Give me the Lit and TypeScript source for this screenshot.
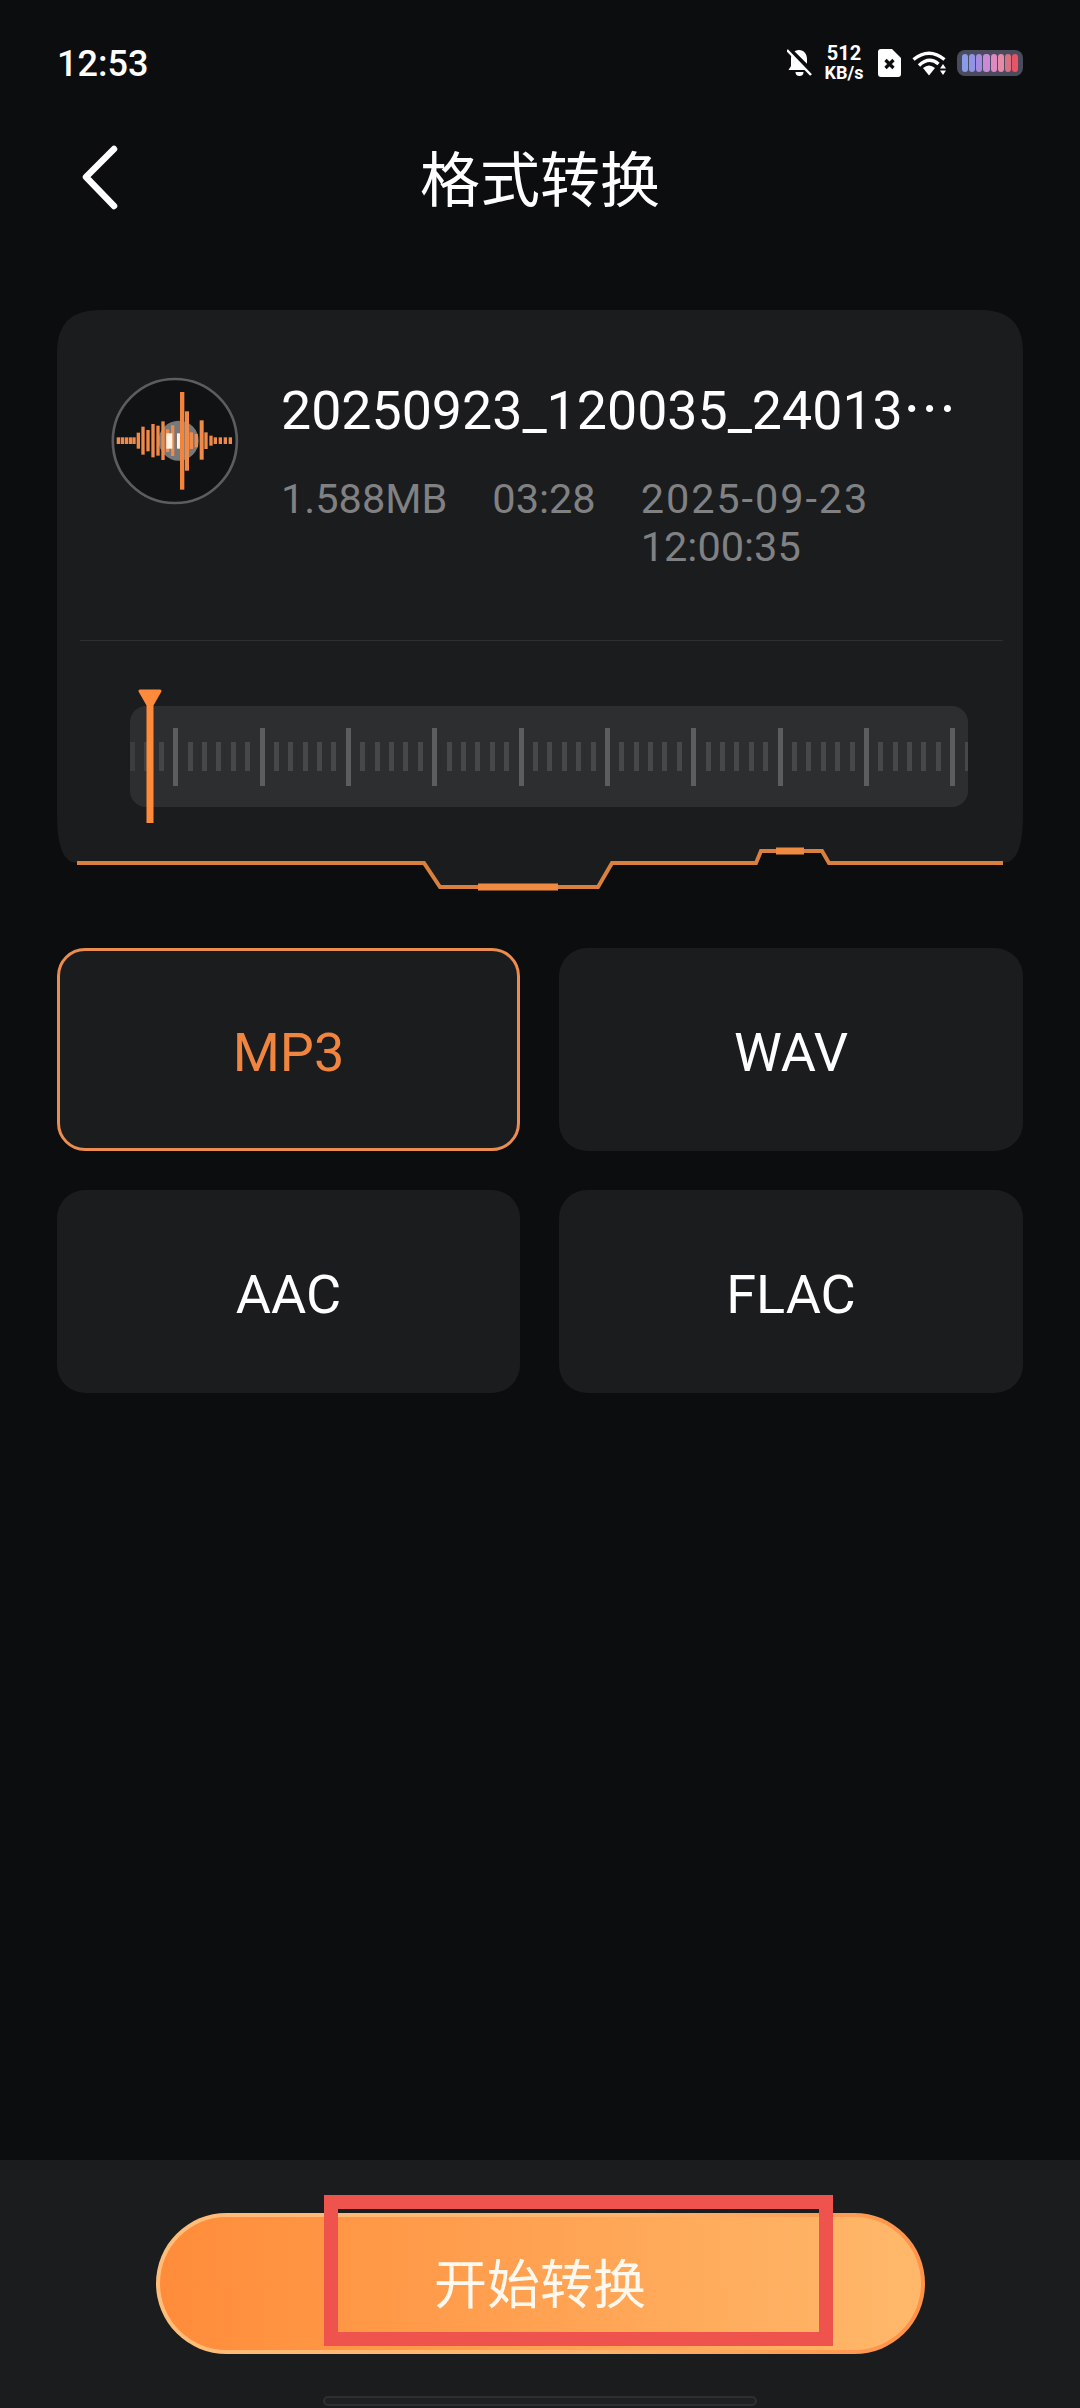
import { LitElement, html, svg, css } from 'lit';
import { customElement } from 'lit/decorators.js';

const BATTERY = ['#8a9be8', '#8f94e6', '#a48ae0', '#c98ad8', '#de8ac0', '#e58aa8', '#d9707f', '#e65468'];

// [x, half height] of each wave bar, in the avatar's viewBox
const WAVE = [
  [84, 10], [96, 10], [108, 10], [120, 10], [131, 10], [144, 24], [158, 42], [173, 32], [188, 50],
  [203, 45], [218, 58], [232, 34], [247, 46], [303, 25], [318, 20], [347, 25], [362, 15],
  [375, 10], [390, 10], [405, 10], [420, 10],
];

const FORMATS = ['MP3', 'WAV', 'AAC', 'FLAC'];

@customElement('app-root')
export class AppRoot extends LitElement {
  static styles = css`
    :host {
      display: block;
      width: 1080px;
      height: 2408px;
      background: #0c0d0f;
      color: #fff;
      font-family: Roboto, 'Noto Sans CJK SC', sans-serif;
      overflow: hidden;
    }

    .page {
      display: flex;
      flex-direction: column;
      height: 2408px;
    }

    .status {
      display: flex;
      align-items: center;
      justify-content: space-between;
      height: 126px;
      padding: 0 57px;
      box-sizing: border-box;
    }

    .time {
      padding-top: 2px;
      font-size: 36px;
      font-weight: 500;
    }

    .status-icons {
      display: flex;
      align-items: center;
    }

    .status-icons svg {
      display: block;
    }

    .speed {
      display: flex;
      flex-direction: column;
      align-items: center;
      width: 38px;
      margin: 0 15px 0 13px;
      font-size: 18px;
      font-weight: 700;
      line-height: 20px;
      white-space: nowrap;
    }

    .speed .rate {
      font-size: 20px;
    }

    .wifi {
      margin: 0 10px 0 11px;
    }

    .battery {
      display: flex;
      gap: 1px;
      width: 66px;
      height: 26px;
      padding: 4px 5px;
      box-sizing: border-box;
      border-radius: 8px;
      background: #4a4c5e;
    }

    .battery span {
      flex: 1;
      border-radius: 3px;
    }

    .header {
      display: flex;
      align-items: center;
      justify-content: center;
      position: relative;
      height: 104px;
    }

    .back {
      position: absolute;
      left: 78px;
      top: 18px;
    }

    .title {
      margin-top: -6px;
      font-size: 60px;
      font-weight: 400;
      font-family: 'Noto Sans CJK SC', sans-serif;
    }

    .card {
      position: relative;
      width: 966px;
      height: 585px;
      margin: 80px 0 53px 57px;
      padding-top: 67px;
      box-sizing: border-box;
    }

    .card-shape {
      position: absolute;
      left: 0;
      top: 0;
    }

    .file {
      position: relative;
      display: flex;
      gap: 42px;
      height: 263px;
      padding-left: 54px;
    }

    .avatar {
      flex: none;
      display: block;
    }

    .info {
      min-width: 0;
      margin-top: 2px;
    }

    .name {
      font-size: 53.7px;
      line-height: 64px;
      white-space: nowrap;
    }

    .meta {
      display: flex;
      gap: 45px;
      margin-top: 32px;
      font-size: 41.5px;
      line-height: 48px;
      color: #808183;
    }

    .meta .when {
      width: 240px;
    }

    .meta .date {
      letter-spacing: 1.9px;
    }

    .divider {
      position: relative;
      height: 1px;
      margin: 0 20px 0 23px;
      background: #2e2f31;
    }

    .track {
      position: relative;
      width: 838px;
      height: 101px;
      margin: 65px 0 0 73px;
      border-radius: 16px;
      background: #2d2e30;
    }

    .ticks {
      display: flex;
      align-items: center;
      gap: 9.4px;
      height: 100%;
      overflow: hidden;
      border-radius: 16px;
      mask-image: linear-gradient(90deg, rgba(0, 0, 0, 0.55), #000 40px);
    }

    .tick {
      flex: none;
      width: 5px;
      height: 29px;
      background: #47484a;
    }

    .tick.major {
      height: 58px;
      background: #5c5d5f;
    }

    .playhead {
      position: absolute;
      left: 8px;
      top: -17px;
    }

    .formats {
      display: grid;
      grid-template-columns: 463px 464px;
      grid-auto-rows: 203px;
      gap: 39px;
      padding-left: 57px;
    }

    .format {
      display: flex;
      align-items: center;
      justify-content: center;
      box-sizing: border-box;
      padding-top: 5px;
      border-radius: 28px;
      background: #1b1c1e;
      font-size: 54px;
    }

    .format.active {
      border: 3px solid #eb8c50;
      color: #f0853f;
    }

    .footer {
      position: relative;
      display: flex;
      flex-direction: column;
      align-items: center;
      gap: 42px;
      margin-top: auto;
      height: 248px;
      padding-top: 53px;
      box-sizing: border-box;
      background: #1b1c1e;
    }

    .start {
      display: flex;
      align-items: center;
      justify-content: center;
      width: 769px;
      height: 141px;
      padding-bottom: 6px;
      box-sizing: border-box;
      border: 4px solid transparent;
      border-radius: 71px;
      background:
        linear-gradient(90deg, #ff8c3a, #ffb86a) padding-box,
        linear-gradient(100deg, #ffbe7a, #ffb26a 60%, #ff9148) border-box;
      color: #fff8ee;
      font-family: 'Noto Sans CJK SC', sans-serif;
      font-size: 53px;
    }

    .highlight {
      position: absolute;
      left: 324px;
      top: 35px;
      width: 509px;
      height: 151px;
      box-sizing: border-box;
      border: 14px solid #ef534e;
    }

    .home {
      width: 434px;
      height: 10px;
      box-sizing: border-box;
      border: 2px solid #2e2f31;
      border-radius: 5px;
      background: #1f2022;
    }
  `;

  renderStatus() {
    return html`
      <div class="status">
        <span class="time">12:53</span>
        <div class="status-icons">
          <svg width="25" height="28" viewBox="0 0 25 28">
            <path fill="#fff" d="M12 1C7 1 4 5 4 10v7l-2.500 4h21L20 17v-7c0-5-3-9-8-9z" />
            <path fill="#fff" d="M8.500 23a4 4 0 0 0 8 0z" />
            <path stroke="#0c0d0f" stroke-width="4.500" d="M2 0l24 24" />
            <path stroke="#fff" stroke-width="2.500" d="M0 1l24 25" />
          </svg>
          <div class="speed"><span class="rate">512</span><span>KB/s</span></div>
          <svg width="23" height="28" viewBox="0 0 23 28">
            <path fill="#fff" d="M3 0h11l9 9v16a3 3 0 0 1-3 3H3a3 3 0 0 1-3-3V3a3 3 0 0 1 3-3z" />
            <path stroke="#0c0d0f" stroke-width="3.200" d="M7.500 11l8 8M15.500 11l-8 8" />
          </svg>
          <svg class="wifi" width="35" height="26" viewBox="0 0 35 26">
            <path fill="none" stroke="#fff" stroke-width="3.400" d="M1.500 9.500Q17-3 32.500 9.500" />
            <path fill="none" stroke="#fff" stroke-width="3.400" d="M7 15.500Q17 6 26.500 14" />
            <path fill="#fff" d="M17 25.500l-6-7.500q6-5 12 0z" />
            <path fill="#fff" d="M28 18.500l3-4.500 3 4.500zM28 20.500h6l-3 4.500z" />
          </svg>
          <div class="battery">
            ${BATTERY.map((c) => html`<span style="background:${c}"></span>`)}
          </div>
        </div>
      </div>
    `;
  }

  renderCardShape() {
    return html`
      <svg class="card-shape" width="966" height="585" viewBox="0 0 966 585">
        <path
          fill="#1b1c1e"
          d="M0 42Q0 0 42 0H924Q966 0 966 42V505Q966 553 946 553H772L765 541H704L699 553H555L541 577H383L367 553H20Q0 553 0 505Z"
        />
        <path
          fill="none"
          stroke="#d9803f"
          stroke-width="4"
          d="M20 553H367L383 577H541L555 553H699L704 541H765L772 553H946"
        />
        <path stroke="#f08a40" stroke-width="7" d="M421 577H501M719 541H747" />
      </svg>
    `;
  }

  renderAvatar() {
    return html`
      <svg class="avatar" width="128" height="128" viewBox="62 77 384 384">
        <circle cx="253.500" cy="269" r="186" fill="#111214" stroke="#5c5d5f" stroke-width="8" />
        <circle cx="265" cy="268" r="60" fill="#77787a" />
        ${WAVE.map(
          ([x, h]) => svg`<rect x=${x - 5} y=${268 - h} width="10" height=${h * 2} fill="#f08a48" />`
        )}
        <rect x="228" y="246" width="18" height="46" fill="#fff3e6" />
        <rect x="260" y="246" width="18" height="46" fill="#fff3e6" />
        <rect x="269" y="122" width="13" height="293" fill="#f4843c" />
        <rect x="284" y="180" width="12" height="178" fill="#f08a48" />
        <rect x="328" y="207" width="12" height="118" fill="#f08a48" />
      </svg>
    `;
  }

  render() {
    // one tick every 14.4px, every sixth one is taller
    const ticks = Array.from({ length: 59 }, (_, i) => i % 6 === 3);

    return html`
      <div class="page">
        ${this.renderStatus()}
        <div class="header">
          <svg class="back" width="42" height="66" viewBox="0 0 42 66">
            <path
              fill="none"
              stroke="#fff"
              stroke-width="6.500"
              stroke-linecap="round"
              stroke-linejoin="round"
              d="M36 5L8 33l28 29"
            />
          </svg>
          <span class="title">格式转换</span>
        </div>

        <div class="card">
          ${this.renderCardShape()}
          <div class="file">
            ${this.renderAvatar()}
            <div class="info">
              <div class="name">20250923_120035_24013⋯</div>
              <div class="meta">
                <span>1.588MB</span>
                <span>03:28</span>
                <span class="when"><span class="date">2025-09-23</span> 12:00:35</span>
              </div>
            </div>
          </div>
          <div class="divider"></div>
          <div class="track">
            <div class="ticks">
              ${ticks.map((major) => html`<span class="tick ${major ? 'major' : ''}"></span>`)}
            </div>
            <svg class="playhead" width="24" height="134" viewBox="0 0 24 134">
              <path fill="#ff8a3c" stroke="#ff8a3c" stroke-width="3" stroke-linejoin="round" d="M2 2H22L14 16V134H10V16Z" />
            </svg>
          </div>
        </div>

        <div class="formats">
          ${FORMATS.map((f, i) => html`<div class="format ${i === 0 ? 'active' : ''}">${f}</div>`)}
        </div>

        <div class="footer">
          <div class="start">开始转换</div>
          <div class="home"></div>
          <div class="highlight"></div>
        </div>
      </div>
    `;
  }
}
